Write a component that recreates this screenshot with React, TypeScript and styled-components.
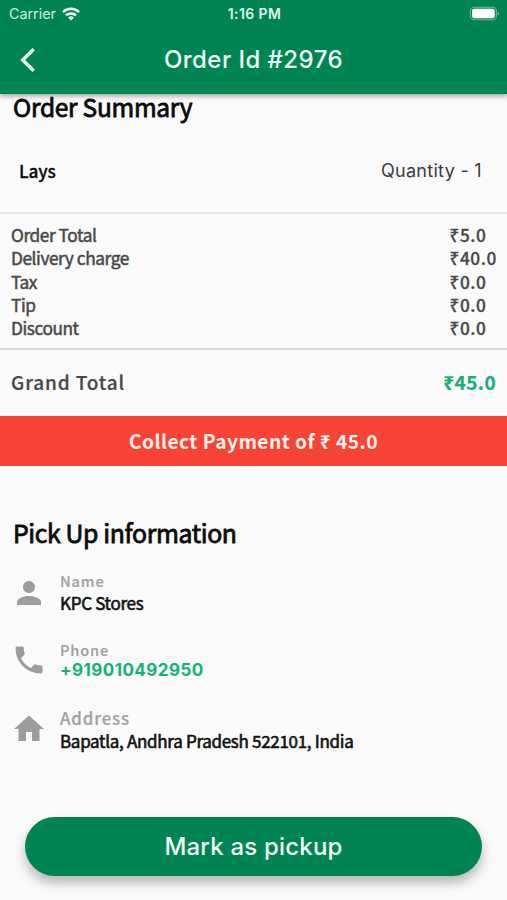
import React from "react";
import styled, { createGlobalStyle } from "styled-components";

const SOURCE = `"Noto Sans CJK SC", "Noto Sans", sans-serif`;
const UI = `Inter, "Noto Sans", sans-serif`;
const GREEN = "#008552";
const ACCENT = "#12b176";

const GlobalStyle = createGlobalStyle`
  * { box-sizing: border-box; }
  body { margin: 0; background: #fafafa; }
`;

const Screen = styled.div`
  width: 507px;
  height: 900px;
  display: flex;
  flex-direction: column;
  overflow: hidden;
  background: #fafafa;
  font-family: ${SOURCE};
  white-space: nowrap;
`;

const Header = styled.header`
  height: 94px;
  flex: none;
  position: relative;
  z-index: 1;
  background: ${GREEN};
  color: #f1fffa;
  font-family: ${UI};
  box-shadow: 0 2px 5px rgba(0, 0, 0, 0.36);
`;

const StatusBar = styled.div`
  height: 27px;
  display: grid;
  grid-template-columns: 1fr auto 1fr;
  align-items: center;
  padding: 0 7px 0 9px;
`;

const Carrier = styled.div`
  display: flex;
  align-items: center;
  gap: 6px;
  font-size: 14.3px;
  color: #c9f0df;
`;

const Clock = styled.div`
  font-size: 14px;
  font-weight: 600;
  letter-spacing: 0.4px;
  color: #dcf7ec;
`;

const BatteryIcon = styled.svg`
  justify-self: end;
`;

const TitleBar = styled.div`
  height: 66px;
  display: grid;
  grid-template-columns: 60px 1fr 60px;
  align-items: center;
`;

const BackButton = styled.button`
  border: 0;
  padding: 0 0 0 20px;
  background: none;
  display: flex;
`;

const Title = styled.h1`
  margin: 0;
  text-align: center;
  font-size: 24px;
  line-height: 30px;
  font-weight: 500;
  letter-spacing: 0.45px;
`;

const Heading = styled.h2<{ $size: number; $spacing: number }>`
  margin: 0;
  padding-left: 13px;
  font-size: ${(p) => p.$size}px;
  line-height: 24px;
  font-weight: 400;
  -webkit-text-stroke: 0.8px;
  letter-spacing: ${(p) => p.$spacing}px;
  color: #0b0b0b;
`;

const Summary = styled.section`
  padding-top: 1px;
`;

const ItemRow = styled.div`
  display: flex;
  justify-content: space-between;
  padding: 40px 25px 29px 19px;
  border-bottom: 2px solid #e7e7e7;
  line-height: 24px;
`;

const ItemName = styled.span`
  font-size: 17.3px;
  font-weight: 500;
  -webkit-text-stroke: 0.3px;
  letter-spacing: -0.2px;
  color: #0b0b0b;
`;

const Quantity = styled.span`
  font-family: ${UI};
  font-size: 18px;
  letter-spacing: 0.3px;
  color: #3c3c3c;
`;

const Charges = styled.div`
  display: flex;
  justify-content: space-between;
  padding: 9px 10px 9px 11px;
  border-bottom: 2px solid #dcdcdc;
  color: #484848;
`;

const ChargeColumn = styled.div<{ $amounts?: boolean }>`
  display: flex;
  flex-direction: column;
  font-size: 17.3px;
  line-height: 23.25px;
  font-weight: ${(p) => (p.$amounts ? 500 : 400)};
  -webkit-text-stroke: ${(p) => (p.$amounts ? 0.3 : 0.5)}px;
  letter-spacing: ${(p) => (p.$amounts ? 0.6 : -0.43)}px;
`;

const GrandTotal = styled.div`
  height: 66px;
  display: flex;
  align-items: center;
  justify-content: space-between;
  padding: 0 11px 3px 11px;
  font-size: 19px;
  font-weight: 500;
  letter-spacing: 0.85px;
  -webkit-text-stroke: 0.2px;
  color: #484848;
`;

const GrandAmount = styled.span`
  font-weight: 700;
  letter-spacing: 0.4px;
  color: ${ACCENT};
`;

const PaymentBanner = styled.div`
  height: 50px;
  display: flex;
  align-items: center;
  justify-content: center;
  background: #f74437;
  color: #fff1ee;
  font-size: 19.2px;
  font-weight: 700;
  letter-spacing: 0.45px;
`;

const Pickup = styled.section`
  padding-top: 53.5px;
`;

const ContactList = styled.div`
  display: flex;
  flex-direction: column;
  padding: 26.5px 13px 0;
`;

const Contact = styled.div`
  height: 68.5px;
  display: grid;
  grid-template-columns: 32px 1fr;
  column-gap: 15px;
`;

const ContactIcon = styled.svg<{ $top: number }>`
  width: 36px;
  height: 36px;
  margin: ${(p) => p.$top}px -2px 0;
  fill: #9c9c9c;
`;

const Label = styled.div<{ $large?: boolean }>`
  font-size: ${(p) => (p.$large ? 16.8 : 14.6)}px;
  line-height: ${(p) => (p.$large ? 23 : 22)}px;
  font-weight: 500;
  letter-spacing: 0.85px;
  -webkit-text-stroke: 0.2px;
  color: #a2a2a2;
`;

const Value = styled.div`
  font-size: 17px;
  line-height: 22px;
  font-weight: 400;
  -webkit-text-stroke: 0.6px;
  letter-spacing: -0.3px;
  color: #111;
`;

const PhoneNumber = styled.div`
  font-family: ${UI};
  font-size: 17px;
  line-height: 18px;
  font-weight: 700;
  letter-spacing: 0.45px;
  color: ${ACCENT};
`;

const PickupButton = styled.button`
  margin: auto 25px 24px;
  height: 59px;
  flex: none;
  border: 0;
  border-radius: 30px;
  background: ${GREEN};
  color: #f1fffa;
  font: 500 24px/30px ${UI};
  letter-spacing: 0.2px;
  box-shadow: 0 7px 12px rgba(0, 0, 0, 0.27);
`;

const charges = [
  ["Order Total", "₹5.0"],
  ["Delivery charge", "₹40.0"],
  ["Tax", "₹0.0"],
  ["Tip", "₹0.0"],
  ["Discount", "₹0.0"],
];

export default function App() {
  return (
    <Screen>
      <GlobalStyle />
      <Header>
        <StatusBar>
          <Carrier>
            Carrier
            <svg width="18" height="14" viewBox="0 0 18 14" fill="none" stroke="#f1fffa" strokeWidth="2.5">
              <path d="M1 5.1a11.5 11.5 0 0 1 16 0M4 8.4a7.2 7.2 0 0 1 10 0" />
              <path d="M9 13.6 6.1 10.7a4.2 4.2 0 0 1 5.8 0z" fill="#f1fffa" stroke="none" />
            </svg>
          </Carrier>
          <Clock>1:16 PM</Clock>
          <BatteryIcon width="31" height="15" viewBox="0 0 31 15">
            <rect x="1.4" y="1.2" width="26" height="12.6" rx="3.8" fill="none" stroke="#67b997" strokeWidth="1.1" />
            <rect x="3" y="2.8" width="22.8" height="9.4" rx="2.2" fill="#fff" />
            <path d="M28.7 5.5c2 .7 2 3.3 0 4z" fill="#67b997" />
          </BatteryIcon>
        </StatusBar>
        <TitleBar>
          <BackButton aria-label="Back">
            <svg width="16" height="24" viewBox="0 0 16 24" fill="none" stroke="#f1fffa" strokeWidth="3.4">
              <path d="M13.7 1.2 2.7 12l11 10.8" />
            </svg>
          </BackButton>
          <Title>Order Id #2976</Title>
        </TitleBar>
      </Header>

      <Summary>
        <Heading $size={24.5} $spacing={-0.27}>Order Summary</Heading>
        <ItemRow>
          <ItemName>Lays</ItemName>
          <Quantity>Quantity - 1</Quantity>
        </ItemRow>
        <Charges>
          <ChargeColumn>
            {charges.map(([name]) => <span key={name}>{name}</span>)}
          </ChargeColumn>
          <ChargeColumn $amounts>
            {charges.map(([name, amount]) => <span key={name}>{amount}</span>)}
          </ChargeColumn>
        </Charges>
        <GrandTotal>
          <span>Grand Total</span>
          <GrandAmount>₹45.0</GrandAmount>
        </GrandTotal>
        <PaymentBanner>Collect Payment of ₹ 45.0</PaymentBanner>
      </Summary>

      <Pickup>
        <Heading $size={24.8} $spacing={-0.36}>Pick Up information</Heading>
        <ContactList>
          <Contact>
            <ContactIcon $top={4.5} viewBox="0 0 24 24">
              <path d="M12 12c2.2 0 4-1.8 4-4s-1.8-4-4-4-4 1.8-4 4 1.8 4 4 4zm0 2c-2.7 0-8 1.3-8 4v2h16v-2c0-2.7-5.3-4-8-4z" />
            </ContactIcon>
            <div>
              <Label>Name</Label>
              <Value>KPC Stores</Value>
            </div>
          </Contact>
          <Contact>
            <ContactIcon $top={3} viewBox="0 0 24 24">
              <path d="M6.6 10.8c1.4 2.8 3.8 5.1 6.6 6.6l2.2-2.2c.3-.3.7-.4 1-.2 1.1.4 2.3.6 3.6.6.6 0 1 .4 1 1V20c0 .6-.4 1-1 1C10.6 21 3 13.4 3 4c0-.6.4-1 1-1h3.5c.6 0 1 .4 1 1 0 1.3.2 2.5.6 3.6.1.3 0 .7-.3 1z" />
            </ContactIcon>
            <div>
              <Label>Phone</Label>
              <PhoneNumber>+919010492950</PhoneNumber>
            </div>
          </Contact>
          <Contact>
            <ContactIcon $top={3.5} viewBox="0 0 24 24">
              <path d="M10 20v-6h4v6h5v-8h3L12 3 2 12h3v8z" />
            </ContactIcon>
            <div>
              <Label $large>Address</Label>
              <Value>Bapatla, Andhra Pradesh 522101, India</Value>
            </div>
          </Contact>
        </ContactList>
      </Pickup>

      <PickupButton>Mark as pickup</PickupButton>
    </Screen>
  );
}
